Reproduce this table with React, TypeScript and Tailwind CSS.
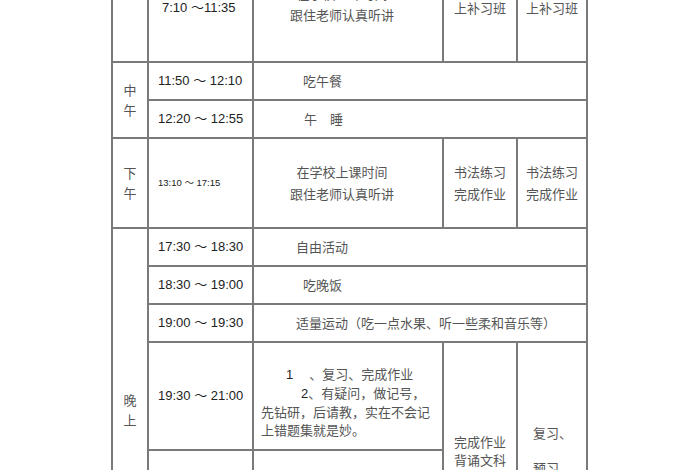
import React from 'react'

const cell = 'border-2 border-[#7a7a7a] p-0'
const cn = "font-['Noto_Sans_CJK_SC',sans-serif] text-[13px] text-[#555]"
const num = "font-['Liberation_Sans','Noto_Sans_CJK_SC',sans-serif] text-[13px] text-[#222]"

function Period({ a, b }: { a: string; b: string }) {
  return (
    <div className={`${cn} flex flex-col items-center leading-[20px]`}>
      <span>{a}</span>
      <span>{b}</span>
    </div>
  )
}

function Time({ children, pl = 'pl-[9px]' }: { children: React.ReactNode; pl?: string }) {
  return <div className={`${num} ${pl} leading-[16px] whitespace-nowrap`}>{children}</div>
}

export default function App() {
  return (
    <div className="w-[700px] h-[470px] overflow-hidden bg-white">
      <table className="ml-[111px] table-fixed border-collapse">
        <colgroup>
          <col className="w-[36px]" />
          <col className="w-[105px]" />
          <col className="w-[190px]" />
          <col className="w-[74px]" />
          <col className="w-[70px]" />
        </colgroup>
        <tbody>
          {/* 上午 (cut off above) */}
          <tr className="h-[62px]">
            <td className={`${cell} border-t-0`} />
            <td className={`${cell} border-t-0 align-top`}>
              <Time pl="pl-[13px]">7:10 ～11:35</Time>
            </td>
            <td className={`${cell} border-t-0 align-top`}>
              <div className={`${cn} -mt-[17px] pr-[12px] text-center leading-[21px]`}>
                <div>在学校上课时间</div>
                <div>跟住老师认真听讲</div>
              </div>
            </td>
            <td className={`${cell} border-t-0 align-top`}>
              <div className={`${cn} text-center leading-[16px]`}>上补习班</div>
            </td>
            <td className={`${cell} border-t-0 align-top`}>
              <div className={`${cn} text-center leading-[16px]`}>上补习班</div>
            </td>
          </tr>

          {/* 中午 */}
          <tr className="h-[38px]">
            <td className={cell} rowSpan={2}>
              <Period a="中" b="午" />
            </td>
            <td className={cell}>
              <Time>11:50 ～ 12:10</Time>
            </td>
            <td className={cell} colSpan={3}>
              <div className={`${cn} pl-[49px]`}>吃午餐</div>
            </td>
          </tr>
          <tr className="h-[38px]">
            <td className={cell}>
              <Time>12:20 ～ 12:55</Time>
            </td>
            <td className={cell} colSpan={3}>
              <div className={`${cn} pl-[50px]`}>午　睡</div>
            </td>
          </tr>

          {/* 下午 */}
          <tr className="h-[90px]">
            <td className={cell}>
              <Period a="下" b="午" />
            </td>
            <td className={cell}>
              <div className="pl-[9px] font-['Liberation_Sans','Noto_Sans_CJK_SC',sans-serif] text-[9.5px] text-[#222] whitespace-nowrap">
                13:10 ～ 17:15
              </div>
            </td>
            <td className={cell}>
              <div className={`${cn} pr-[12px] text-center leading-[22px]`}>
                <div>在学校上课时间</div>
                <div>跟住老师认真听讲</div>
              </div>
            </td>
            <td className={cell}>
              <div className={`${cn} text-center leading-[22px]`}>
                <div>书法练习</div>
                <div>完成作业</div>
              </div>
            </td>
            <td className={cell}>
              <div className={`${cn} text-center leading-[22px]`}>
                <div>书法练习</div>
                <div>完成作业</div>
              </div>
            </td>
          </tr>

          {/* 晚上 */}
          <tr className="h-[38px]">
            <td className={`${cell} align-top`} rowSpan={5}>
              <div className="pt-[161px]">
                <Period a="晚" b="上" />
              </div>
            </td>
            <td className={cell}>
              <Time>17:30 ～ 18:30</Time>
            </td>
            <td className={cell} colSpan={3}>
              <div className={`${cn} pl-[42px]`}>自由活动</div>
            </td>
          </tr>
          <tr className="h-[38px]">
            <td className={cell}>
              <Time>18:30 ～ 19:00</Time>
            </td>
            <td className={cell} colSpan={3}>
              <div className={`${cn} pl-[49px]`}>吃晚饭</div>
            </td>
          </tr>
          <tr className="h-[38px]">
            <td className={cell}>
              <Time>19:00 ～ 19:30</Time>
            </td>
            <td className={cell} colSpan={3}>
              <div className={`${cn} pl-[42px] whitespace-nowrap`}>适量运动（吃一点水果、听一些柔和音乐等）</div>
            </td>
          </tr>
          <tr className="h-[108px]">
            <td className={cell}>
              <Time>19:30 ～ 21:00</Time>
            </td>
            <td className={`${cell} align-top`}>
              <div className={`${cn} pt-[22px] pl-[7px] leading-[18px] whitespace-nowrap`}>
                <div className="pl-[25px]">
                  <span className="font-['Liberation_Sans',sans-serif] text-[#222]">1</span>
                  <span className="pl-[16px]">、复习、完成作业</span>
                </div>
                <div className="pl-[40px]">
                  <span className="font-['Liberation_Sans',sans-serif] text-[#222]">2</span>
                  <span>、有疑问，做记号，</span>
                </div>
                <div>先钻研，后请教，实在不会记</div>
                <div>上错题集就是妙。</div>
              </div>
            </td>
            <td className={`${cell} align-top`} rowSpan={2}>
              <div className={`${cn} pt-[90px] text-center leading-[18px]`}>
                <div>完成作业</div>
                <div>背诵文科</div>
              </div>
            </td>
            <td className={`${cell} align-top`} rowSpan={2}>
              <div className={`${cn} pt-[82px] pl-[15px] leading-[16px]`}>
                <div>复习、</div>
                <div className="pt-[19px]">预习</div>
              </div>
            </td>
          </tr>
          <tr className="h-[108px]">
            <td className={cell} />
            <td className={cell} />
          </tr>
        </tbody>
      </table>
    </div>
  )
}
